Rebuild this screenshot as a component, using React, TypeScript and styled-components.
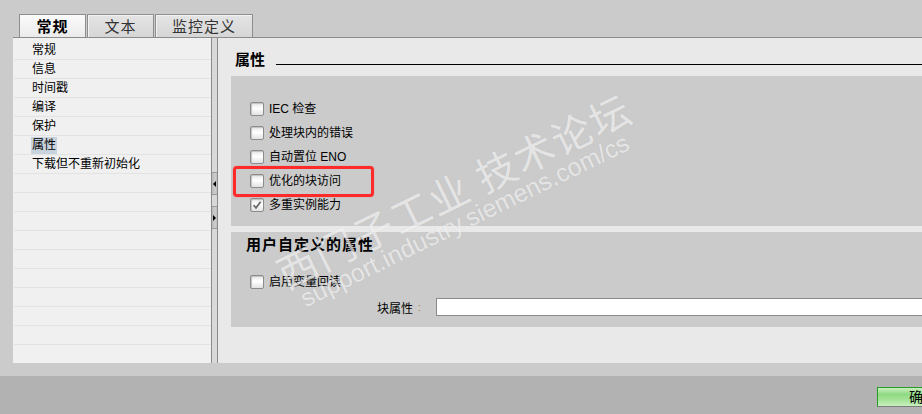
import React from "react";
import styled, { createGlobalStyle, css } from "styled-components";

const GlobalStyle = createGlobalStyle`
  html, body {
    margin: 0;
    padding: 0;
    width: 922px;
    height: 414px;
    overflow: hidden;
    background: #cbcbcb;
  }
  *, *::before, *::after { box-sizing: border-box; }
`;

const FONT = `"Liberation Sans", "Noto Sans CJK SC", sans-serif`;

const Page = styled.div`
  position: relative;
  width: 922px;
  height: 414px;
  display: flex;
  flex-direction: column;
  background: #cbcbcb;
  font-family: ${FONT};
  color: #000;
  overflow: hidden;
`;

const TabBar = styled.div`
  height: 38px;
  display: flex;
  align-items: flex-end;
  gap: 1px;
  margin-left: 13px;
  padding-left: 6px;
  border-bottom: 1px solid #8c8c8c;
`;

const Tab = styled.div<{ $active?: boolean; $w: number }>`
  width: ${(p) => p.$w}px;
  height: 23px;
  display: flex;
  align-items: center;
  justify-content: center;
  font-size: 15px;
  line-height: 1;
  border: 1px solid #8e8e8e;
  border-bottom: none;
  color: ${(p) => (p.$active ? "#000" : "#333")};
  font-weight: ${(p) => (p.$active ? 700 : 400)};
  letter-spacing: 1px;
  ${(p) =>
    p.$active
      ? css`
          background: linear-gradient(#fbfbfb, #ebebeb);
        `
      : css`
          background: linear-gradient(#e4e4e4, #d6d6d6);
          box-shadow: inset 1px 1px 0 #f2f2f2;
        `}
`;

const Body = styled.div`
  height: 325px;
  display: flex;
  margin-left: 13px;
`;

const NavPanel = styled.div`
  width: 198px;
  background: #f0f0f0;
  padding-top: 3px;
  display: flex;
  flex-direction: column;
  overflow: hidden;
`;

const NavRow = styled.div`
  height: 19px;
  flex: none;
  border-bottom: 1px solid #e3e3e3;
  margin-left: 1px;
  padding-left: 17px;
  font-size: 12px;
  display: flex;
  align-items: center;
`;

const NavLabel = styled.span<{ $selected?: boolean }>`
  padding: 0 1px;
  line-height: 17px;
  background: ${(p) => (p.$selected ? "#c9d3dd" : "transparent")};
`;

const Splitter = styled.div`
  width: 7px;
  background: #d9d9d9;
  border-left: 1px solid #8a8a8a;
  border-right: 1px solid #8a8a8a;
  display: flex;
  flex-direction: column;
  padding-top: 134px;
  gap: 11px;
`;

const SplitButton = styled.div`
  height: 23px;
  background: linear-gradient(90deg, #b8b8b8, #cfcfcf 60%, #bdbdbd);
  border-top: 1px solid #9a9a9a;
  border-bottom: 1px solid #9a9a9a;
  display: flex;
  align-items: center;
  justify-content: center;
`;

const Arrow = styled.span<{ $dir: "left" | "right" }>`
  width: 0;
  height: 0;
  border-top: 3px solid transparent;
  border-bottom: 3px solid transparent;
  ${(p) =>
    p.$dir === "left"
      ? css`
          border-right: 3px solid #000;
        `
      : css`
          border-left: 3px solid #000;
        `}
`;

const Content = styled.div`
  flex: 1;
  background: #e9e9e9;
  padding-left: 13px;
  display: flex;
  flex-direction: column;
`;

const SectionHeader = styled.div`
  height: 38px;
  display: flex;
  align-items: center;
  padding-left: 4px;
  padding-top: 4px;
  gap: 11px;
`;

const SectionTitle = styled.span`
  font-size: 15px;
  font-weight: 700;
  line-height: 1;
`;

const Rule = styled.div`
  flex: 1;
  height: 1px;
  background: #000;
  margin-top: 10px;
`;

const Group = styled.div<{ $top: number; $bottom: number }>`
  background: #cbcbcb;
  padding: ${(p) => p.$top}px 0 ${(p) => p.$bottom}px 19px;
  display: flex;
  flex-direction: column;
`;

const GroupGap = styled.div`
  height: 6px;
  flex: none;
`;

const GroupTitle = styled.div`
  font-size: 15px;
  font-weight: 700;
  letter-spacing: 1px;
  line-height: 24px;
  margin-left: -4px;
  margin-bottom: 13px;
`;

const CheckRow = styled.div<{ $marked?: boolean }>`
  position: relative;
  height: 24px;
  display: flex;
  align-items: center;
  gap: 5px;
  font-size: 12px;
  ${(p) =>
    p.$marked &&
    css`
      &::after {
        content: "";
        position: absolute;
        left: -17px;
        top: -3px;
        width: 141px;
        height: 31px;
        border: 3px solid #ff2a2a;
        border-radius: 4px;
        box-shadow: 0 0 1px rgba(255, 0, 0, 0.6);
        pointer-events: none;
      }
    `}
`;

const Box = styled.span`
  width: 14px;
  height: 14px;
  flex: none;
  border: 1px solid #8c8c8c;
  border-radius: 2px;
  background: linear-gradient(#e8e8e8, #ffffff 45%, #e2e2e2);
  box-shadow: inset 1px 1px 1px #c0c0c0;
  display: flex;
  align-items: center;
  justify-content: center;
`;

const CheckLabel = styled.span`
  line-height: 1;
`;

const FieldRow = styled.div`
  height: 18px;
  margin-top: 4px;
  display: flex;
  align-items: center;
  padding-left: 127px;
  font-size: 12px;
`;

const FieldLabel = styled.span`
  width: 41px;
`;

const Colon = styled.span`
  width: 18px;
  color: #b07a30;
  font-size: 10px;
`;

const FieldInput = styled.div`
  flex: 1;
  height: 18px;
  background: #fff;
  border: 1px solid #8a8a8a;
  border-right: none;
`;

const Strip = styled.div`
  height: 13px;
  flex: none;
`;

const Footer = styled.div`
  flex: 1;
  background: #b2b2b2;
  padding: 11px 0 0 877px;
`;

const OkButton = styled.div`
  width: 90px;
  height: 20px;
  border: 1px solid #7d7d7d;
  border-top-color: #2a9a2a;
  border-left-color: #2a9a2a;
  background: linear-gradient(#c9efc0, #8fd982 35%, #a8e59b 70%, #c8f0bf);
  font-size: 14px;
  line-height: 18px;
  padding-left: 31px;
  letter-spacing: 1px;
`;

const Watermark = styled.div`
  position: absolute;
  left: 270px;
  top: 257px;
  transform-origin: left top;
  transform: rotate(-26deg);
  pointer-events: none;
  color: rgba(255, 255, 255, 0.6);
  text-shadow: 0 0 1px rgba(150, 150, 150, 0.25);
  white-space: nowrap;
`;

const WmBig = styled.div`
  font-family: "Noto Sans CJK SC", sans-serif;
  font-size: 40px;
  line-height: 40px;
  letter-spacing: 2px;
`;

const WmSmall = styled.div`
  font-family: "Liberation Sans", sans-serif;
  font-size: 25px;
  line-height: 24px;
  margin-left: 10px;
`;

const navItems = ["常规", "信息", "时间戳", "编译", "保护", "属性", "下载但不重新初始化"];

const Check = () => (
  <svg width="10" height="10" viewBox="0 0 10 10">
    <path d="M1.5 5.2 L4 7.8 L8.6 1.8" fill="none" stroke="#6a6a6a" strokeWidth="1.8" />
  </svg>
);

const checks: { label: string; checked?: boolean; marked?: boolean }[] = [
  { label: "IEC 检查" },
  { label: "处理块内的错误" },
  { label: "自动置位 ENO" },
  { label: "优化的块访问", marked: true },
  { label: "多重实例能力", checked: true },
];

export default function App() {
  const rows = Array.from({ length: 17 }, (_, i) => navItems[i] ?? "");
  return (
    <>
      <GlobalStyle />
      <Page>
        <TabBar>
          <Tab $active $w={67}>常规</Tab>
          <Tab $w={67}>文本</Tab>
          <Tab $w={98}>监控定义</Tab>
        </TabBar>
        <Body>
          <NavPanel>
            {rows.map((r, i) => (
              <NavRow key={i}>
                {r && <NavLabel $selected={r === "属性"}>{r}</NavLabel>}
              </NavRow>
            ))}
          </NavPanel>
          <Splitter>
            <SplitButton>
              <Arrow $dir="left" />
            </SplitButton>
            <SplitButton>
              <Arrow $dir="right" />
            </SplitButton>
          </Splitter>
          <Content>
            <SectionHeader>
              <SectionTitle>属性</SectionTitle>
              <Rule />
            </SectionHeader>
            <Group $top={21} $bottom={9}>
              {checks.map((c) => (
                <CheckRow key={c.label} $marked={c.marked}>
                  <Box>{c.checked && <Check />}</Box>
                  <CheckLabel>{c.label}</CheckLabel>
                </CheckRow>
              ))}
            </Group>
            <GroupGap />
            <Group $top={1} $bottom={11}>
              <GroupTitle>用户自定义的属性</GroupTitle>
              <CheckRow>
                <Box />
                <CheckLabel>启用变量回读</CheckLabel>
              </CheckRow>
              <FieldRow>
                <FieldLabel>块属性</FieldLabel>
                <Colon>:</Colon>
                <FieldInput />
              </FieldRow>
            </Group>
          </Content>
        </Body>
        <Strip />
        <Footer>
          <OkButton>确定</OkButton>
        </Footer>
        <Watermark>
          <WmBig>西门子工业 技术论坛</WmBig>
          <WmSmall>support.industry.siemens.com/cs</WmSmall>
        </Watermark>
      </Page>
    </>
  );
}
